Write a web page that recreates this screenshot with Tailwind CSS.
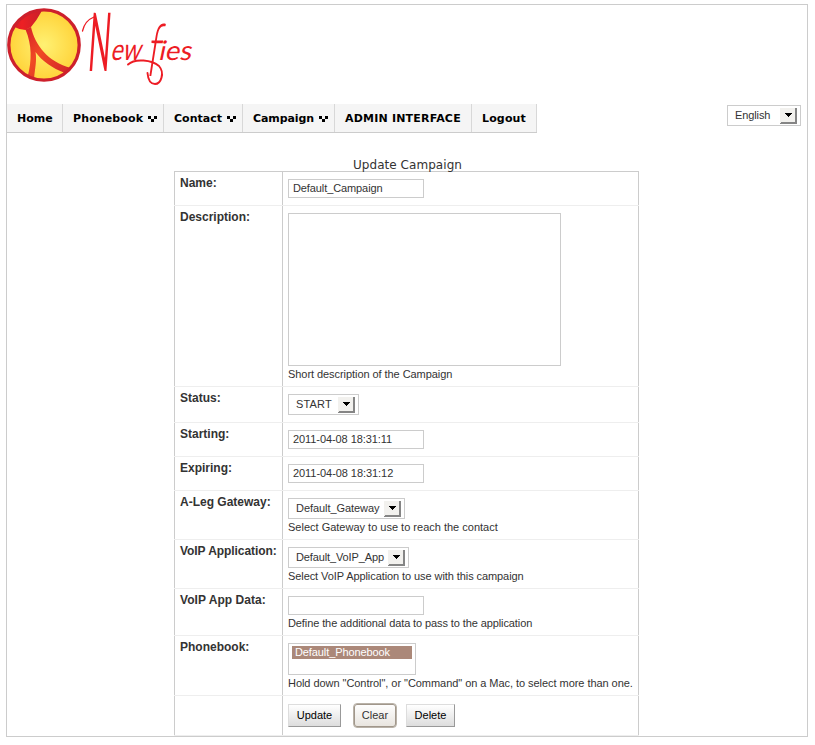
<!DOCTYPE html>
<html lang="en">
<head>
<meta charset="utf-8">
<title>Newfies</title>
<script src="https://cdn.jsdelivr.net/npm/@tailwindcss/browser@4"></script>
</head>
<body class="bg-white pl-[6px] pt-[4px] font-['Liberation_Sans',Arial,sans-serif] text-[11px] leading-[13px] text-[#333]">
<svg class="hidden">
  <symbol id="dots" viewBox="0 0 9 6"><path d="M0 0h3v3h-3zM6 0h3v3h-3zM3 3h3v3h-3z" fill="#000"/></symbol>
  <symbol id="drop" viewBox="0 0 17 16"><path d="M0 0h16v15h-16z" fill="#f2f1ee"/><path d="M0 15h1v-1h14v-14h2v16h-17z" fill="#858585"/><path d="M5 5h7v1h-1v1h-1v1h-1v1h-1v-1h-1v-1h-1v-1h-1z" fill="#000"/></symbol>
</svg>
<div class="h-[733px] w-[802px] border border-[#ccc]">
  <header class="h-[99px]">
    <svg width="190" height="84" viewBox="7 5 190 84" class="block overflow-visible" role="img" aria-label="Newfies">
      <defs>
        <radialGradient id="gold" cx="50%" cy="50%" r="55%"><stop offset="0" stop-color="#fff173"/><stop offset="1" stop-color="#ffd034"/></radialGradient>
        <linearGradient id="red" x1="0" x2="1"><stop offset="0" stop-color="#c71c28"/><stop offset=".45" stop-color="#ed2024"/><stop offset="1" stop-color="#c9202a"/></linearGradient>
        <linearGradient id="limb" x1="0" y1="0" x2="1" y2="1"><stop offset="0" stop-color="#d71f27"/><stop offset=".4" stop-color="#f04a24"/><stop offset="1" stop-color="#ce2029"/></linearGradient>
        <clipPath id="ball"><circle cx="44" cy="45" r="35.5"/></clipPath>
      </defs>
      <circle cx="44" cy="45" r="35.2" fill="url(#gold)"/>
      <g clip-path="url(#ball)">
        <path d="M6 30L14.500 27Q20 30 25.500 30L31 27Q37 20 41.500 11.500L38 4H8Z" fill="url(#red)"/>
        <path d="M25.500 29.500L31 27C35 45 48 62 71 68L65 73C52 68 42 61 35.500 52C37 60 35 68 34 79L27.500 77C32 61 32 45 25.500 29.500Z" fill="url(#limb)"/>
      </g>
      <circle cx="44" cy="45" r="35.2" fill="none" stroke="#cd202c" stroke-width="3.300"/>
      <g fill="#ed1c24" font-family="Lato,'Open Sans',sans-serif" font-weight="400">
        <text transform="translate(87 70.500) skewX(-4) scale(.500 1.400)" font-size="58">N</text>
        <text transform="translate(110 60) skewX(-14) scale(1 1.150)" font-size="26" textLength="30" lengthAdjust="spacingAndGlyphs">ew</text>
        <text transform="translate(145 76) skewX(-9) scale(.560 1.050)" font-size="70" font-weight="300">f</text>
        <text transform="translate(158 59.500) skewX(-12)" font-size="27" textLength="33" lengthAdjust="spacingAndGlyphs">ies</text>
      </g>
      <g fill="none" stroke="#ed1c24" stroke-linecap="round">
        <path d="M82.500 31C84 24 89 19 94 17" stroke-width="1.300"/>
        <path d="M128 64.500C135 58 152 60 159 66C165 73 161 84 155 84C150 84 148 79 147.500 73" stroke-width="1.900"/>
      </g>
    </svg>
  </header>
  <div class="flex justify-between">
    <nav class="flex h-[29px] border-b border-[#ccc] bg-[#f5f5f5] font-['DejaVu_Sans',sans-serif] font-bold tracking-[0.12px] text-black">
      <a class="flex w-[56px] items-center border-r border-[#d8d8d8] pl-[10px] tracking-normal">Home</a>
      <a class="flex w-[101px] items-center border-r border-[#d8d8d8] pl-[10px]">Phonebook<svg class="ml-auto mr-[6px] mt-[2px] h-[6px] w-[9px]"><use href="#dots"/></svg></a>
      <a class="flex w-[79px] items-center border-r border-[#d8d8d8] pl-[10px] tracking-normal">Contact<svg class="ml-auto mr-[6px] mt-[2px] h-[6px] w-[9px]"><use href="#dots"/></svg></a>
      <a class="flex w-[92px] items-center border-r border-[#d8d8d8] pl-[10px] tracking-[-0.1px]">Campaign<svg class="ml-auto mr-[6px] mt-[2px] h-[6px] w-[9px]"><use href="#dots"/></svg></a>
      <a class="flex w-[137px] items-center whitespace-nowrap border-r border-[#d8d8d8] pl-[10px] tracking-[0.2px]">ADMIN INTERFACE</a>
      <a class="flex w-[65px] items-center border-r border-[#d8d8d8] pl-[10px] tracking-[0.15px]">Logout</a>
    </nav>
    <div class="mr-[6px] mt-[1px] flex h-[21px] w-[74px] items-center justify-between border border-[#ccc] pl-[7px] pr-[3px] tracking-[-0.1px]">English<svg class="mt-px h-[16px] w-[17px]"><use href="#drop"/></svg></div>
  </div>

  <main class="ml-[167px] mt-[24px] w-[465px]">
    <h1 class="h-[14px] pl-[2px] text-center font-['DejaVu_Sans',sans-serif] text-[12px] leading-[16px] tracking-[0.05px]">Update Campaign</h1>
    <div class="border-t border-[#ccc]">
      <div class="flex h-[34px] border-b border-[#eee]">
        <div class="w-[108px] border-l border-[#ccc] pl-[5px] pt-[4px] text-[12px] font-bold leading-[14px]">Name:</div>
        <div class="flex-1 border-x border-[#ccc] pl-[5px] pt-[7px]"><div class="h-[19px] w-[136px] border border-[#ccc] pl-[4px] pt-[2px] tracking-[-0.1px]">Default_Campaign</div></div>
      </div>
      <div class="flex h-[181px] border-b border-[#eee]">
        <div class="w-[108px] border-l border-[#ccc] pl-[5px] pt-[4px] text-[12px] font-bold leading-[14px]">Description:</div>
        <div class="flex-1 border-x border-[#ccc] pl-[5px] pt-[7px]"><div class="h-[153px] w-[273px] border border-[#ccc]"></div><p class="mt-[2px] tracking-[-0.06px]">Short description of the Campaign</p></div>
      </div>
      <div class="flex h-[36px] border-b border-[#eee]">
        <div class="w-[108px] border-l border-[#ccc] pl-[5px] pt-[4px] text-[12px] font-bold leading-[14px]">Status:</div>
        <div class="flex-1 border-x border-[#ccc] pl-[5px] pt-[7px]"><div class="flex h-[21px] w-[71px] items-center justify-between border border-[#ccc] pl-[7px] pr-[3px] tracking-[0.15px]">START<svg class="mt-px h-[16px] w-[17px]"><use href="#drop"/></svg></div></div>
      </div>
      <div class="flex h-[34px] border-b border-[#eee]">
        <div class="w-[108px] border-l border-[#ccc] pl-[5px] pt-[4px] text-[12px] font-bold leading-[14px]">Starting:</div>
        <div class="flex-1 border-x border-[#ccc] pl-[5px] pt-[7px]"><div class="h-[19px] w-[136px] border border-[#ccc] pl-[4px] pt-[2px] tracking-[-0.08px]">2011-04-08 18:31:11</div></div>
      </div>
      <div class="flex h-[34px] border-b border-[#eee]">
        <div class="w-[108px] border-l border-[#ccc] pl-[5px] pt-[4px] text-[12px] font-bold leading-[14px]">Expiring:</div>
        <div class="flex-1 border-x border-[#ccc] pl-[5px] pt-[7px]"><div class="h-[19px] w-[136px] border border-[#ccc] pl-[4px] pt-[2px] tracking-[-0.06px]">2011-04-08 18:31:12</div></div>
      </div>
      <div class="flex h-[49px] border-b border-[#eee]">
        <div class="w-[108px] border-l border-[#ccc] pl-[5px] pt-[4px] text-[12px] font-bold leading-[14px]">A-Leg Gateway:</div>
        <div class="flex-1 border-x border-[#ccc] pl-[5px] pt-[7px]"><div class="flex h-[21px] w-[117px] items-center justify-between border border-[#ccc] pl-[7px] pr-[3px] tracking-[-0.06px]">Default_Gateway<svg class="mt-px h-[16px] w-[17px]"><use href="#drop"/></svg></div><p class="mt-[2px]">Select Gateway to use to reach the contact</p></div>
      </div>
      <div class="flex h-[49px] border-b border-[#eee]">
        <div class="w-[108px] whitespace-nowrap border-l border-[#ccc] pl-[5px] pt-[4px] text-[12px] font-bold leading-[14px] tracking-[-0.06px]">VoIP Application:</div>
        <div class="flex-1 border-x border-[#ccc] pl-[5px] pt-[7px]"><div class="flex h-[21px] w-[121px] items-center justify-between border border-[#ccc] pl-[7px] pr-[3px] tracking-[-0.12px]">Default_VoIP_App<svg class="mt-px h-[16px] w-[17px] shrink-0"><use href="#drop"/></svg></div><p class="mt-[2px] tracking-[-0.08px]">Select VoIP Application to use with this campaign</p></div>
      </div>
      <div class="flex h-[47px] border-b border-[#eee]">
        <div class="w-[108px] border-l border-[#ccc] pl-[5px] pt-[4px] text-[12px] font-bold leading-[14px] tracking-[0.05px]">VoIP App Data:</div>
        <div class="flex-1 border-x border-[#ccc] pl-[5px] pt-[7px]"><div class="h-[19px] w-[136px] border border-[#ccc]"></div><p class="mt-[2px] tracking-[-0.1px]">Define the additional data to pass to the application</p></div>
      </div>
      <div class="flex h-[60px] border-b border-[#eee]">
        <div class="w-[108px] border-l border-[#ccc] pl-[5px] pt-[4px] text-[12px] font-bold leading-[14px]">Phonebook:</div>
        <div class="flex-1 whitespace-nowrap border-x border-[#ccc] pl-[5px] pt-[7px]"><div class="h-[32px] w-[128px] border border-[#ccc] px-[3px] pt-[2px]"><div class="h-[13px] bg-[#ab8879] pl-[3px] leading-[12px] tracking-[-0.1px] text-white">Default_Phonebook</div></div><p class="mt-[2px] tracking-[-0.05px]">Hold down "Control", or "Command" on a Mac, to select more than one.</p></div>
      </div>
      <div class="flex h-[40px] border-b border-[#eee]">
        <div class="w-[108px] border-l border-[#ccc]"></div>
        <div class="flex flex-1 items-start border-x border-[#ccc] pl-[5px] pt-[8px] text-black">
          <div class="h-[23px] w-[53px] border border-b-[#999] border-l-[#ddd] border-r-[#999] border-t-[#ddd] bg-linear-to-b from-white to-[#ddd] pt-[4px] text-center">Update</div>
          <div class="-mt-px ml-[12px] h-[25px] w-[44px] rounded-[4px] border border-[#b9b2a8] bg-linear-to-b from-white to-[#e8e4de] pt-[5px] text-center text-[#333] inset-ring-1 inset-ring-[#a1978b]">Clear</div>
          <div class="ml-[9px] h-[23px] w-[49px] border border-b-[#999] border-l-[#ddd] border-r-[#999] border-t-[#ddd] bg-linear-to-b from-white to-[#ddd] pt-[4px] text-center">Delete</div>
        </div>
      </div>
    </div>
  </main>
</div>
</body>
</html>
